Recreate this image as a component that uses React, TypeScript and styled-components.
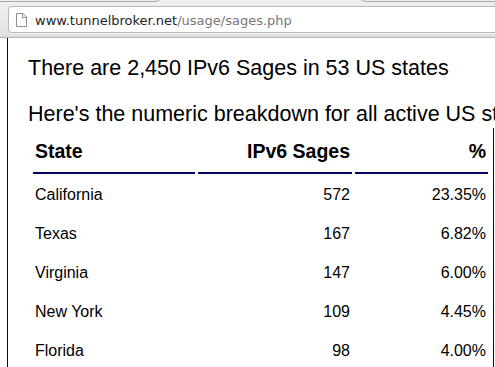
import React from "react";
import styled, { createGlobalStyle } from "styled-components";

const Global = createGlobalStyle`
  html, body {
    margin: 0;
    padding: 0;
    overflow: hidden;
    background: #ffffff;
  }
  body {
    font-family: "Liberation Sans", Arial, sans-serif;
    color: #000;
  }
`;

const Window = styled.div`
  width: 495px;
  height: 367px;
  display: flex;
  flex-direction: column;
  overflow: hidden;
`;

const Toolbar = styled.div`
  position: relative;
  flex: 0 0 auto;
  padding: 6px 0 4px 8px;
  background: linear-gradient(#efefef, #e6e6e6 80%, #dedede);
  border-bottom: 1px solid #b4b4b4;
`;

const TabEdges = styled.svg`
  position: absolute;
  left: 0;
  top: 0;
`;

const AddressBar = styled.div`
  box-sizing: border-box;
  height: 27px;
  display: flex;
  align-items: center;
  gap: 8px;
  padding: 1px 0 0 7px;
  background: #fff;
  border: 1px solid #b9b9b9;
  border-right: none;
  border-radius: 4px 0 0 4px;
  box-shadow: 0 1px 0 rgba(255, 255, 255, 0.7);
`;

const Url = styled.span`
  font-family: "DejaVu Sans", "Liberation Sans", sans-serif;
  font-size: 13px;
  line-height: 15px;
  white-space: nowrap;
`;

const Host = styled.span`
  color: #1e1e1e;
`;

const UrlPath = styled.span`
  color: #777777;
`;

const Viewport = styled.div`
  flex: 1 1 auto;
  overflow: hidden;
  background: #fff;
`;

const Page = styled.div`
  margin-left: 7px;
  min-height: 100%;
  border-left: 1px solid #000066;
  padding-top: 18px;
  width: 520px;
`;

const Lead = styled.p<{ $gap?: number }>`
  margin: ${(p) => p.$gap ?? 0}px 0 0 0;
  padding-left: 20px;
  font-size: 21.5px;
  line-height: 24px;
  white-space: nowrap;
`;

const TableFrame = styled.div`
  margin-top: 2px;
  width: 463px;
  padding-left: 22px;
  border-right: 1px solid #000066;
  height: 260px;
`;

const StatsTable = styled.table`
  table-layout: fixed;
  width: 461px;
  border-collapse: separate;
  border-spacing: 3px;
`;

const HeadCell = styled.th<{ $w: number; $align: "left" | "right" }>`
  box-sizing: border-box;
  width: ${(p) => p.$w}px;
  text-align: ${(p) => p.$align};
  font-size: 19.5px;
  font-weight: bold;
  line-height: 22px;
  padding: 9px 2px 10px;
  border-bottom: 2px solid #000066;
`;

const Cell = styled.td<{ $align: "left" | "right" }>`
  text-align: ${(p) => p.$align};
  font-size: 16px;
  line-height: 18px;
  padding: 9px 2px;
  white-space: nowrap;
`;

const PageIcon = () => (
  <svg width="11" height="14" viewBox="0 0 11 14">
    <path d="M0.5 0.5 H7 L10.5 4 V13.5 H0.5 Z" fill="#fff" stroke="#8c8c8c" />
    <path d="M6.5 0.5 V4.5 H10.5" fill="none" stroke="#8c8c8c" />
  </svg>
);

const rows: [string, number, string][] = [
  ["California", 572, "23.35%"],
  ["Texas", 167, "6.82%"],
  ["Virginia", 147, "6.00%"],
  ["New York", 109, "4.45%"],
  ["Florida", 98, "4.00%"],
];

export default function App() {
  return (
    <>
      <Global />
      <Window>
        <Toolbar>
          <TabEdges width="495" height="6" viewBox="0 0 495 6">
            <path d="M0 1.5 H154 Q158 1.5 159.5 0" fill="none" stroke="#a9a9a9" />
            <path d="M361.5 0 Q363 1.5 367 1.5 H495" fill="none" stroke="#a9a9a9" />
          </TabEdges>
          <AddressBar>
            <PageIcon />
            <Url>
              <Host>www.tunnelbroker.net</Host>
              <UrlPath>/usage/sages.php</UrlPath>
            </Url>
          </AddressBar>
        </Toolbar>
        <Viewport>
          <Page>
            <Lead>There are 2,450 IPv6 Sages in 53 US states</Lead>
            <Lead $gap={22}>Here's the numeric breakdown for all active US states:</Lead>
            <TableFrame>
              <StatsTable>
                <thead>
                  <tr>
                    <HeadCell $w={162} $align="left">State</HeadCell>
                    <HeadCell $w={154} $align="right">IPv6 Sages</HeadCell>
                    <HeadCell $w={133} $align="right">%</HeadCell>
                  </tr>
                </thead>
                <tbody>
                  {rows.map(([state, n, pct]) => (
                    <tr key={state}>
                      <Cell $align="left">{state}</Cell>
                      <Cell $align="right">{n}</Cell>
                      <Cell $align="right">{pct}</Cell>
                    </tr>
                  ))}
                </tbody>
              </StatsTable>
            </TableFrame>
          </Page>
        </Viewport>
      </Window>
    </>
  );
}
